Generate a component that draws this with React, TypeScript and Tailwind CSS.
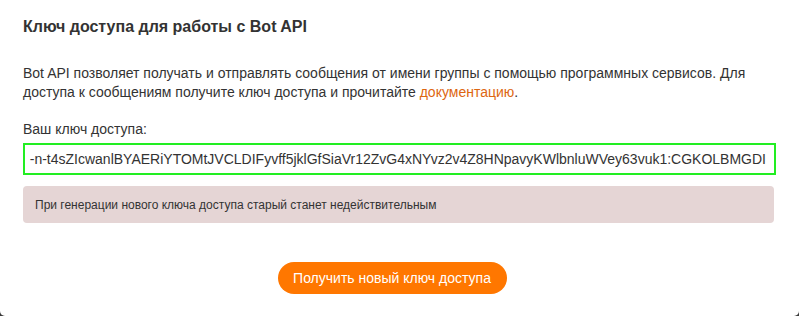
import React from "react";

export default function App() {
  return (
    <div
      className="w-[799px] h-[316px] bg-[#3a3a3a] overflow-hidden"
      style={{ fontFamily: '"Liberation Sans", Arial, sans-serif' }}
    >
      <div className="w-[799px] h-[316px] bg-white rounded-b-[5px] px-[23px] text-[#333333]">
        <div className="pt-[17px] h-[37px] text-[16px] leading-[20px] font-bold">
          Ключ доступа для работы с Bot API
        </div>
        <p className="mt-[27px] text-[14px] leading-[19px]">
          Bot API позволяет получать и отправлять сообщения от имени группы с помощью программных сервисов. Для
          доступа к сообщениям получите ключ доступа и прочитайте{" "}
          <a className="text-[#dd6611]">документацию</a>.
        </p>
        <div className="mt-[17px] text-[14px] leading-[20px]">Ваш ключ доступа:</div>
        <div className="mt-[4px] h-[32px] border-2 border-[#22ee22] flex items-center justify-end overflow-hidden pl-[8px] pr-[8px] text-[14px] whitespace-nowrap">
          <span>-n-t4sZIcwanlBYAERiYTOMtJVCLDIFyvff5jklGfSiaVr12ZvG4xNYvz2v4Z8HNpavyKWlbnluWVey63vuk1:CGKOLBMGDI</span>
        </div>
        <div className="mt-[11px] mr-[2px] h-[37px] rounded-[4px] bg-[#e5d5d5] flex items-center px-[12px] text-[12px] text-[#333333]">
          При генерации нового ключа доступа старый станет недействительным
        </div>
        <div className="mt-[39px] flex justify-center pr-[15px]">
          <button className="h-[32px] w-[229px] rounded-full bg-[#ff7700] text-white text-[14px]">
            Получить новый ключ доступа
          </button>
        </div>
      </div>
    </div>
  );
}
